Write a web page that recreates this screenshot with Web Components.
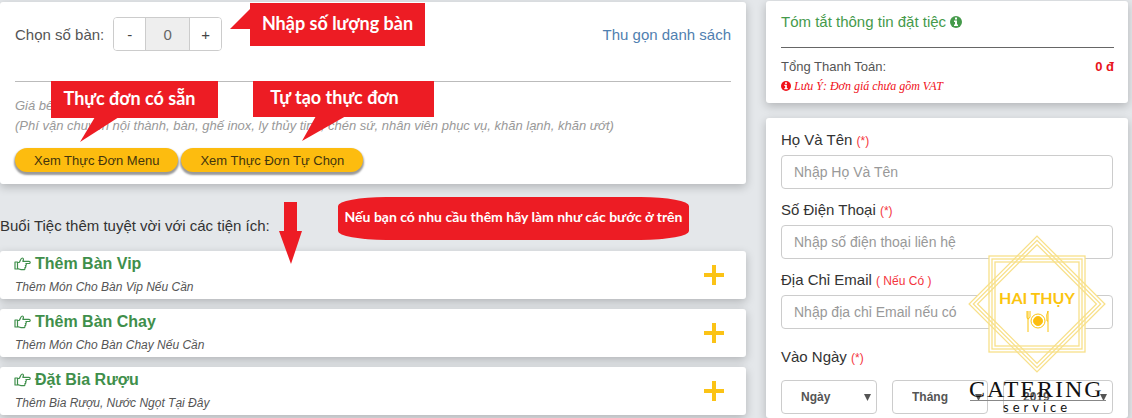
<!DOCTYPE html>
<html lang="vi">
<head>
<meta charset="utf-8">
<title>Đặt tiệc</title>
<style>
  body { margin: 0; background: #e4e7ea; font-family: "Liberation Sans", Arial, sans-serif; color: #444; }
</style>
</head>
<body>
<booking-page></booking-page>

<script>
class BaseElement extends HTMLElement {
  constructor() {
    super();
    this.attachShadow({ mode: 'open' });
  }

  connectedCallback() {
    this.render();
  }
}

class PanelCard extends BaseElement {
  render() {
    this.shadowRoot.innerHTML = `
      <style>
        :host { display: block; background: #fff; border-radius: 3px; box-shadow: 0 3px 10px rgba(0, 0, 0, 0.22); }
      </style>
      <slot></slot>
    `;
  }
}

class TableStepper extends BaseElement {
  render() {
    this.shadowRoot.innerHTML = `
      <style>
        :host { display: flex; align-items: center; gap: 9px; font-size: 15px; color: #555; }
        .group { display: flex; height: 34px; box-sizing: border-box; border: 1px solid #ccc; border-radius: 4px; overflow: hidden; }
        button { width: 31px; padding: 0; border: 0; background: #fff; color: #444; font: inherit; }
        input { width: 45px; box-sizing: border-box; padding: 0; border: solid #ccc; border-width: 0 1px; background: #eee; color: #666; font: inherit; text-align: center; }
      </style>
      <label for="count">Chọn số bàn:</label>
      <div class="group">
        <button type="button" id="minus">-</button>
        <input id="count" value="0" readonly>
        <button type="button" id="plus">+</button>
      </div>
    `;
    const input = this.shadowRoot.querySelector('#count');
    const step = (n) => { input.value = Math.max(0, Number(input.value) + n); };
    this.shadowRoot.querySelector('#minus').addEventListener('click', () => step(-1));
    this.shadowRoot.querySelector('#plus').addEventListener('click', () => step(1));
  }
}

class PillButton extends BaseElement {
  render() {
    this.shadowRoot.innerHTML = `
      <style>
        :host { display: block; }
        button { display: block; height: 24px; padding: 0 19px; border: 0; border-radius: 12px; background: #fdbc0f; color: #43350d; font: inherit; font-size: 13px; box-shadow: 0 2px 2px 1px #999; white-space: nowrap; }
      </style>
      <button type="button"><slot></slot></button>
    `;
  }
}

class ExtraRow extends BaseElement {
  render() {
    this.shadowRoot.innerHTML = `
      <style>
        :host { display: block; }
        .row { display: flex; align-items: center; justify-content: space-between; height: 48px; padding: 0 21px 0 14px; }
        h3 { display: flex; align-items: center; gap: 4px; margin: 0; font-size: 16px; line-height: 24px; font-weight: bold; color: #3f8f4b; }
        p { margin: 0 0 0 1px; font-size: 12px; line-height: 22px; font-style: italic; color: #555; }
        button { display: flex; padding: 0; border: 0; background: none; }
      </style>
      <panel-card>
        <div class="row">
          <div>
            <h3>
              <svg width="17" height="14" viewBox="0 0 17 14" fill="none" stroke="#3f8f4b" stroke-width="1.200" stroke-linejoin="round">
                <path d="M1 5v7h2.500V5zM3.500 5.500H5C6.500 4.500 6.500 1 8.200 1c1.800 0 1.300 2 .6 3.300H15c1.600 0 1.600 2.200 0 2.200h-3.500M11.500 6.500c1.200.4 1 2-.1 2.200.8.500.5 1.900-.5 2 .4 1-.1 2-1.400 2H8c-1.700 0-2.800-1-4.500-1"/>
              </svg>
              <span>${this.getAttribute('heading')}</span>
            </h3>
            <p><slot></slot></p>
          </div>
          <button type="button" aria-label="${this.getAttribute('heading')}">
            <svg width="22" height="20" viewBox="0 0 22 20"><path d="M1 10h20M11 0v20" stroke="#fbc316" stroke-width="4"/></svg>
          </button>
        </div>
      </panel-card>
    `;
  }
}

class InfoIcon extends BaseElement {
  render() {
    this.shadowRoot.innerHTML = `
      <style>
        :host { display: block; }
        svg { display: block; }
      </style>
      <svg width="${this.getAttribute('size')}" height="${this.getAttribute('size')}" viewBox="0 0 12 12">
        <circle cx="6" cy="6" r="6" fill="currentColor"/>
        <path d="M5 1.500h2v2H5zM4 4.500h3v4h1V10H4V8.500h1V6H4z" fill="#fff"/>
      </svg>
    `;
  }
}

class OrderSummary extends BaseElement {
  render() {
    this.shadowRoot.innerHTML = `
      <style>
        :host { display: block; }
        .body { padding: 10px 14px 8px 15px; }
        h2 { display: flex; align-items: center; gap: 4px; margin: 0; font-size: 15px; line-height: 22px; font-weight: normal; color: #459a4b; }
        hr { margin: 14px 0 9px; border: 0; border-top: 1px solid #666; }
        .total { display: flex; justify-content: space-between; font-size: 13px; line-height: 20px; color: #555; }
        .total b { color: #e8131c; }
        .note { display: flex; align-items: center; gap: 3px; margin: 0; font: italic 12px/18px "Liberation Serif", "Times New Roman", serif; color: #f01018; }
      </style>
      <panel-card>
        <div class="body">
          <h2>Tóm tắt thông tin đặt tiệc <info-icon size="12"></info-icon></h2>
          <hr>
          <div class="total"><span>Tổng Thanh Toán:</span><b>0 đ</b></div>
          <p class="note"><info-icon size="10"></info-icon> Lưu Ý: Đơn giá chưa gồm VAT</p>
        </div>
      </panel-card>
    `;
  }
}

class TextField extends BaseElement {
  render() {
    this.shadowRoot.innerHTML = `
      <style>
        :host { display: flex; flex-direction: column; gap: 5px; }
        label { font-size: 15px; line-height: 20px; color: #333; }
        small { font-size: 12px; line-height: 12px; color: #f4333c; }
        input { width: 100%; height: 34px; box-sizing: border-box; padding: 0 12px; border: 1px solid #ccc; border-radius: 4px; background: #fff; font: inherit; font-size: 14px; }
        input::placeholder { color: #999; }
      </style>
      <label for="field">${this.getAttribute('label')} <small>${this.getAttribute('mark')}</small></label>
      <input id="field" placeholder="${this.getAttribute('hint')}">
    `;
  }
}

class DateSelects extends BaseElement {
  render() {
    const box = (id, text) => `
      <div class="box">
        <select id="${id}" aria-label="${text}"><option>${text}</option></select>
        <svg width="7" height="7" viewBox="0 0 7 7"><path d="M0 0h7L3.500 7z" fill="#555"/></svg>
      </div>`;
    this.shadowRoot.innerHTML = `
      <style>
        :host { display: flex; flex-direction: column; gap: 13px; }
        label { font-size: 15px; line-height: 20px; color: #333; }
        small { font-size: 12px; line-height: 12px; color: #f4333c; }
        .boxes { display: grid; grid-template-columns: 96fr 96fr 110fr; gap: 15px; }
        .box { display: grid; align-items: center; }
        .box > * { grid-area: 1 / 1; }
        select { appearance: none; width: 100%; height: 34px; box-sizing: border-box; padding: 0 19px; border: 1px solid #ccc; border-radius: 4px; background: #fff; color: #555; font: inherit; font-size: 12px; font-weight: bold; }
        svg { justify-self: end; margin-right: 6px; pointer-events: none; }
      </style>
      <label for="day">Vào Ngày <small>(*)</small></label>
      <div class="boxes">${box('day', 'Ngày')}${box('month', 'Tháng')}${box('year', '2019')}</div>
    `;
  }
}

class BookingForm extends BaseElement {
  render() {
    this.shadowRoot.innerHTML = `
      <style>
        :host { display: block; }
        form { display: flex; flex-direction: column; gap: 11px; padding: 12px 15px 4px; }
        date-selects { margin-top: 7px; }
      </style>
      <panel-card>
        <form>
          <text-field label="Họ Và Tên" mark="(*)" hint="Nhập Họ Và Tên"></text-field>
          <text-field label="Số Điện Thoại" mark="(*)" hint="Nhập số điện thoại liên hệ"></text-field>
          <text-field label="Địa Chỉ Email" mark="( Nếu Có )" hint="Nhập địa chỉ Email nếu có"></text-field>
          <date-selects></date-selects>
        </form>
      </panel-card>
    `;
  }
}

// Red speech box, the tail is a polygon hanging out of the box
class CalloutNote extends BaseElement {
  render() {
    this.shadowRoot.innerHTML = `
      <style>
        :host { position: absolute; display: flex; align-items: center; justify-content: center; box-sizing: border-box; padding-bottom: 4px; background: #ed1c24; color: #fff; font-family: Lato, "Noto Sans", sans-serif; font-weight: bold; font-size: 18px; white-space: nowrap; }
        svg { position: absolute; left: 0; top: 0; overflow: visible; }
        span { position: relative; }
      </style>
      <svg width="1" height="1"><polygon points="${this.getAttribute('tail') || ''}" fill="#ed1c24"/></svg>
      <span><slot></slot></span>
    `;
  }
}

class BrandLogo extends BaseElement {
  render() {
    const frame = (inset) => `<rect x="${21 + inset}" y="${21 + inset}" width="${96 - 2 * inset}" height="${96 - 2 * inset}"/>`;
    const frames = frame(0) + frame(3) + frame(6);
    this.shadowRoot.innerHTML = `
      <style>
        :host { display: block; pointer-events: none; }
        svg { display: block; }
        .name { font: bold 16px Lato, sans-serif; fill: #fbc40f; }
        .word { font: 24px "Liberation Serif", serif; letter-spacing: 2px; fill: #111; }
        .sub { font: 13px Lato, sans-serif; letter-spacing: 4px; fill: #111; }
      </style>
      <svg width="140" height="183" viewBox="0 0 140 183">
        <g fill="#fff"><rect x="21" y="21" width="96" height="96"/><rect x="21" y="21" width="96" height="96" transform="rotate(45 69 69)"/></g>
        <g fill="none" stroke="#f8e08a" stroke-width="1.300">${frames}<g transform="rotate(45 69 69)">${frames}</g></g>
        <text class="name" x="69" y="69" text-anchor="middle">HAI THỤY</text>
        <g fill="none" stroke="#fbc40f">
          <circle cx="70" cy="86" r="7"/>
          <circle cx="70" cy="86" r="4.500" fill="#fdbc0f"/>
          <path d="M60 76v21M59 76v6q0 2 1 2t2-2v-6M80 97V76q-2 3-1 10h1"/>
        </g>
        <text class="word" x="1" y="162">CATERING</text>
        <path d="M2 165.500h136" stroke="#888"/>
        <text class="sub" x="35" y="177">service</text>
      </svg>
    `;
  }
}

class BookingPage extends BaseElement {
  render() {
    this.shadowRoot.innerHTML = `
      <style>
        :host { display: block; position: relative; overflow: hidden; }
        .columns { display: grid; grid-template-columns: 373fr 181fr; gap: 20px; padding-right: 4px; }
        main { padding-top: 2px; }
        aside { display: flex; flex-direction: column; gap: 15px; padding-top: 1px; }
        .menu { padding: 15px 15px 12px; }
        .top { display: flex; align-items: center; justify-content: space-between; }
        .top a { font-size: 15px; color: #5080b0; text-decoration: none; }
        hr { margin: 30px 0 14px; border: 0; border-top: 1px solid #bbb; }
        .fees { margin: 0 0 12px; font-size: 13px; line-height: 20px; font-style: italic; color: #999; }
        .pills { display: flex; gap: 3px; }
        h2 { margin: 32px 0 15px; font-size: 15px; line-height: 20px; font-weight: normal; color: #333; }
        .extras { display: flex; flex-direction: column; gap: 10px; }
        .count { left: 250px; top: 3px; width: 175px; height: 43px; }
        .ready { left: 51px; top: 81px; width: 167px; height: 37px; padding-right: 10px; }
        .custom { left: 253px; top: 81px; width: 181px; height: 36px; padding-right: 18px; }
        .more { left: 338px; top: 197px; width: 351px; height: 43px; border-radius: 48px / 9px; font-size: 14px; }
        .arrow { position: absolute; left: 279px; top: 202px; }
        brand-logo { position: absolute; right: 24px; top: 235px; }
      </style>
      <div class="columns">
        <main>
          <panel-card>
            <div class="menu">
              <div class="top">
                <table-stepper></table-stepper>
                <a href="#">Thu gọn danh sách</a>
              </div>
              <hr>
              <p class="fees">Giá bên<br>(Phí vận chuyển nội thành, bàn, ghế inox, ly thủy tinh, chén sứ, nhân viên phục vụ, khăn lạnh, khăn ướt)</p>
              <div class="pills">
                <pill-button>Xem Thực Đơn Menu</pill-button>
                <pill-button>Xem Thực Đơn Tự Chọn</pill-button>
              </div>
            </div>
          </panel-card>
          <h2>Buổi Tiệc thêm tuyệt vời với các tiện ích:</h2>
          <div class="extras">
            <extra-row heading="Thêm Bàn Vip">Thêm Món Cho Bàn Vip Nếu Cần</extra-row>
            <extra-row heading="Thêm Bàn Chay">Thêm Món Cho Bàn Chay Nếu Cần</extra-row>
            <extra-row heading="Đặt Bia Rượu">Thêm Bia Rượu, Nước Ngọt Tại Đây</extra-row>
          </div>
        </main>
        <aside>
          <order-summary></order-summary>
          <booking-form></booking-form>
        </aside>
      </div>
      <callout-note class="count" tail="0,6 0,26 -20,26">Nhập số lượng bàn</callout-note>
      <callout-note class="ready" tail="44,36 68,36 29,61">Thực đơn có sẵn</callout-note>
      <callout-note class="custom" tail="63,35 93,35 49,60">Tự tạo thực đơn</callout-note>
      <callout-note class="more">Nếu bạn có nhu cầu thêm hãy làm như các bước ở trên</callout-note>
      <svg class="arrow" width="23" height="62" viewBox="0 0 23 62"><path d="M5 0h13v29h5L12 62 0 29h5z" fill="#ed1c24"/></svg>
      <brand-logo></brand-logo>
    `;
  }
}

customElements.define('panel-card', PanelCard);
customElements.define('table-stepper', TableStepper);
customElements.define('pill-button', PillButton);
customElements.define('extra-row', ExtraRow);
customElements.define('info-icon', InfoIcon);
customElements.define('order-summary', OrderSummary);
customElements.define('text-field', TextField);
customElements.define('date-selects', DateSelects);
customElements.define('booking-form', BookingForm);
customElements.define('callout-note', CalloutNote);
customElements.define('brand-logo', BrandLogo);
customElements.define('booking-page', BookingPage);
</script>
</body>
</html>
